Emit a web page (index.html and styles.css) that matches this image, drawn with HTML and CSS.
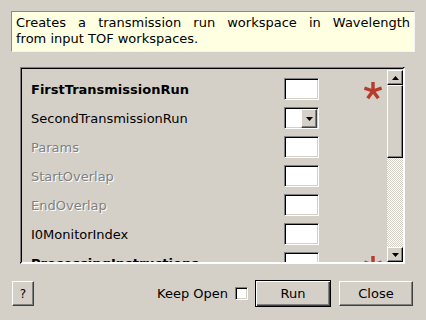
FILE: index.html
```html
<!DOCTYPE html>
<html>
<head>
<meta charset="utf-8">
<link rel="stylesheet" href="styles.css">
</head>
<body>
<div class="dialog">
  <div class="desc"><span class="line-justified">Creates a transmission run workspace in Wavelength</span> from input TOF workspaces.</div>
  <div class="frame">
    <div class="rows">
      <div class="row">
        <span class="label bold">FirstTransmissionRun</span>
        <span class="field"></span>
        <svg class="star" width="20" height="20" viewBox="0 0 20 20"><g stroke="#b83a2a" stroke-width="3.4" stroke-linecap="butt"><line x1="10" y1="10" x2="10" y2="1"/><line x1="10" y1="10" x2="18.6" y2="7.2"/><line x1="10" y1="10" x2="15.3" y2="17.3"/><line x1="10" y1="10" x2="4.7" y2="17.3"/><line x1="10" y1="10" x2="1.4" y2="7.2"/></g></svg>
      </div>
      <div class="row">
        <span class="label">SecondTransmissionRun</span>
        <span class="field combo"><span class="drop"><svg width="7" height="4" viewBox="0 0 7 4"><path d="M0 0H7L3.5 4Z" fill="#000"/></svg></span></span>
      </div>
      <div class="row">
        <span class="label disabled">Params</span>
        <span class="field"></span>
      </div>
      <div class="row">
        <span class="label disabled">StartOverlap</span>
        <span class="field"></span>
      </div>
      <div class="row">
        <span class="label disabled">EndOverlap</span>
        <span class="field"></span>
      </div>
      <div class="row">
        <span class="label">I0MonitorIndex</span>
        <span class="field"></span>
      </div>
      <div class="row">
        <span class="label bold">ProcessingInstructions</span>
        <span class="field"></span>
        <svg class="star" width="20" height="20" viewBox="0 0 20 20"><g stroke="#b83a2a" stroke-width="3.4"><line x1="10" y1="10" x2="10" y2="1"/><line x1="10" y1="10" x2="18.6" y2="7.2"/><line x1="10" y1="10" x2="15.3" y2="17.3"/><line x1="10" y1="10" x2="4.7" y2="17.3"/><line x1="10" y1="10" x2="1.4" y2="7.2"/></g></svg>
      </div>
    </div>
    <div class="scrollbar">
      <div class="sbtn"><svg width="7" height="4" viewBox="0 0 7 4"><path d="M0 4H7L3.5 0Z" fill="#000"/></svg></div>
      <div class="thumb"></div>
      <div class="trough"></div>
      <div class="sbtn"><svg width="7" height="4" viewBox="0 0 7 4"><path d="M0 0H7L3.5 4Z" fill="#000"/></svg></div>
    </div>
  </div>
  <div class="footer">
    <button class="btn help">?</button>
    <span class="spacer"></span>
    <label class="keep">Keep Open <span class="check"></span></label>
    <button class="btn run">Run</button>
    <button class="btn close">Close</button>
  </div>
</div>
</body>
</html>
```

FILE: styles.css
```css
* { box-sizing: border-box; }
html, body {
  margin: 0;
  padding: 0;
  width: 426px;
  height: 320px;
  overflow: hidden;
  background: #d4d0c8;
  font-family: "DejaVu Sans", sans-serif;
  font-size: 13px;
  color: #000;
}
.dialog {
  display: flex;
  flex-direction: column;
  padding-top: 11px;
}
.desc {
  margin-left: 11px;
  width: 404px;
  height: 41px;
  background: #ffffe1;
  border: 1px solid;
  border-color: #8a8a8a #f4f4f4 #f4f4f4 #8a8a8a;
  padding: 3px 4px 0 4px;
  line-height: 16px;
}
.line-justified {
  display: block;
  text-align: justify;
  text-align-last: justify;
}
.frame {
  margin-top: 15px;
  margin-left: 20px;
  width: 385px;
  height: 197px;
  border: 2px solid;
  border-color: #000 #fff #fff #000;
  display: flex;
  position: relative;
}
.frame::before {
  content: "";
  position: absolute;
  left: -2px; top: -2px; right: 0; bottom: 0;
  border-top: 1px solid #808080;
  border-left: 1px solid #808080;
  pointer-events: none;
}
.rows {
  flex: 1;
  overflow: hidden;
  padding-top: 9px;
  display: flex;
  flex-direction: column;
  gap: 7px;
}
.row {
  display: flex;
  align-items: center;
  height: 22px;
  flex: none;
}
.label {
  width: 262px;
  padding-left: 9px;
  white-space: nowrap;
}
.bold { font-weight: bold; }
.disabled {
  color: #808080;
  text-shadow: 1px 1px 0 #fff;
}
.field {
  width: 35px;
  height: 22px;
  background: #fff;
  border: 1px solid;
  border-color: #808080 #fff #fff #808080;
  box-shadow: inset 1px 1px 0 #000, inset -1px -1px 0 #d4d0c8;
  display: flex;
  justify-content: flex-end;
  padding: 2px;
}
.combo { padding: 1px 1px 2px 2px; }
.drop {
  width: 16px;
  height: 19px;
  background: #d4d0c8;
  border: 1px solid;
  border-color: #fff #404040 #404040 #fff;
  box-shadow: inset -1px -1px 0 #808080;
  display: flex;
  align-items: center;
  justify-content: center;
}
.star {
  margin-left: 44px;
  margin-top: 4px;
}
.scrollbar {
  width: 16px;
  margin-top: 1px;
  display: flex;
  flex-direction: column;
  flex: none;
}
.sbtn, .thumb {
  background: #d4d0c8;
  border: 1px solid;
  border-color: #fff #000 #000 #fff;
  box-shadow: inset -1px -1px 0 #808080;
}
.sbtn {
  height: 15px;
  display: flex;
  align-items: center;
  justify-content: center;
}
.thumb { height: 73px; }
.trough {
  flex: 1;
  background-color: #fff;
  background-image: conic-gradient(#d4d0c8 25%, #fff 0 50%, #d4d0c8 0 75%, #fff 0);
  background-size: 2px 2px;
}
.footer {
  display: flex;
  align-items: center;
  margin-top: 16px;
  padding: 0 13px 0 12px;
  height: 27px;
}
.spacer { flex: 1; }
.btn {
  font-family: "DejaVu Sans", sans-serif;
  font-size: 13px;
  color: #000;
  background: #d4d0c8;
  border: 1px solid;
  border-color: #fff #404040 #404040 #fff;
  box-shadow: inset -1px -1px 0 #808080;
  padding: 0;
  height: 25px;
}
.help { width: 22px; font-size: 12px; }
.keep {
  display: flex;
  align-items: center;
  gap: 7px;
  margin-right: 1px;
}
.check {
  width: 13px;
  height: 13px;
  background: #fff;
  border: 1px solid;
  border-color: #808080 #fff #fff #808080;
  box-shadow: inset 1px 1px 0 #000, inset -1px -1px 0 #d4d0c8;
}
.run {
  margin-left: 6px;
  width: 76px;
  height: 27px;
  border: 1px solid #000;
  box-shadow: inset 1px 1px 0 #fff, inset -1px -1px 0 #404040, inset -2px -2px 0 #808080;
}
.close {
  margin-left: 8px;
  width: 74px;
}
```
